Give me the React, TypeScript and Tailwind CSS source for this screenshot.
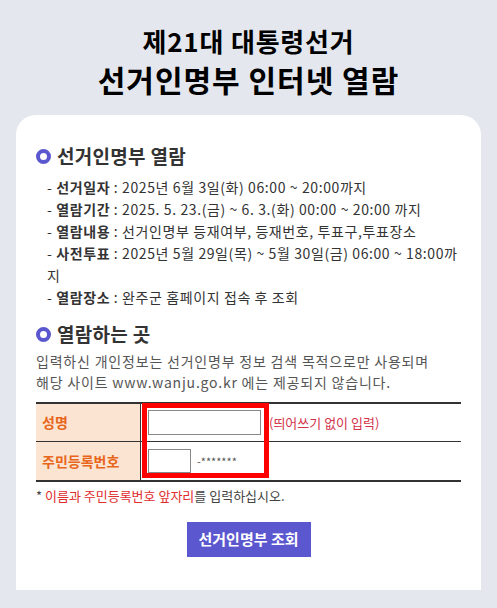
import React from "react";

const sans = "font-['Noto_Sans_CJK_KR',sans-serif]";

const infoRows = [
  { label: "선거일자", value: "2025년 6월 3일(화) 06:00 ~ 20:00까지" },
  { label: "열람기간", value: "2025. 5. 23.(금) ~ 6. 3.(화) 00:00 ~ 20:00 까지" },
  { label: "열람내용", value: "선거인명부 등재여부, 등재번호, 투표구,투표장소" },
  { label: "사전투표", value: "2025년 5월 29일(목) ~ 5월 30일(금) 06:00 ~ 18:00까지" },
  { label: "열람장소", value: "완주군 홈페이지 접속 후 조회" },
];

function SectionTitle({ children }: { children: React.ReactNode }) {
  return (
    <h3 className="flex items-center gap-[6px] h-[28px] text-[19px] tracking-[0.3px] font-bold text-[#333]">
      <span className="w-[15px] h-[15px] rounded-full border-[4px] border-[#5b57cf] shrink-0" />
      {children}
    </h3>
  );
}

export default function App() {
  return (
    <div className={`min-h-[608px] bg-[#e4e7ee] ${sans} pt-[23px] pb-[17px]`}>
      <div className="text-center font-['Noto_Sans_CJK_KR',serif] font-bold text-black">
        <h1 className="text-[26px] leading-[36px] tracking-[0.8px]">제21대 대통령선거</h1>
        <h2 className="text-[30px] leading-[40px] tracking-[1px]">선거인명부 인터넷 열람</h2>
      </div>

      <div className="mx-[16px] mt-[16px] bg-white rounded-t-[20px] px-[20px] pt-[27px] pb-[33px]">
        <SectionTitle>선거인명부 열람</SectionTitle>
        <ul className="mt-[6px] pl-[11px] text-[14px] leading-[22px] tracking-[0.6px] text-[#333]">
          {infoRows.map((r) => (
            <li key={r.label}>
              <span>
                - <b className="font-bold">{r.label}</b> : {r.value}
              </span>
            </li>
          ))}
        </ul>

        <div className="mt-[12px]">
          <SectionTitle>열람하는 곳</SectionTitle>
        </div>
        <p className="mt-[3px] text-[14px] leading-[21px] tracking-[0.8px] text-[#555]">
          입력하신 개인정보는 선거인명부 정보 검색 목적으로만 사용되며
          <br />
          해당 사이트 www.wanju.go.kr 에는 제공되지 않습니다.
        </p>

        <div className="relative mt-[9px] border-t-2 border-b-2 border-[#333]">
          <div className="flex h-[38px] border-b border-[#333]">
            <div className="w-[105px] border-r border-[#333] bg-[#fbe4d1] pl-[6px] flex items-center text-[14px] font-bold text-[#e8661c]">
              성명
            </div>
            <div className="flex items-center pl-[7px]">
              <input className="w-[113px] h-[25px] border border-[#888] bg-white outline-none" />
              <span className="ml-[8px] text-[13px] text-[#d2334a]">(띄어쓰기 없이 입력)</span>
            </div>
          </div>
          <div className="flex h-[38px]">
            <div className="w-[105px] border-r border-[#333] bg-[#fbe4d1] pl-[6px] flex items-center text-[14px] font-bold text-[#e8661c]">
              주민등록번호
            </div>
            <div className="flex items-center pl-[7px]">
              <input className="w-[43px] h-[24px] border border-[#888] bg-white outline-none" />
              <span className="ml-[6px] text-[11px] text-[#555]">-*******</span>
            </div>
          </div>
          {/* highlight frame around the inputs */}
          <div className="absolute left-[106px] top-[-1px] w-[127px] h-[75px] border-[5px] border-[#f00] pointer-events-none" />
        </div>

        <p className="mt-[4px] text-[13px] leading-[20px] text-[#444]">
          * <span className="text-[#e02d2d]">이름과 주민등록번호 앞자리</span>를 입력하십시오.
        </p>

        <div className="mt-[16px] flex justify-center">
          <button className="w-[124px] h-[35px] bg-[#5b57cf] text-white text-[15px] font-bold">
            선거인명부 조회
          </button>
        </div>
      </div>
    </div>
  );
}
